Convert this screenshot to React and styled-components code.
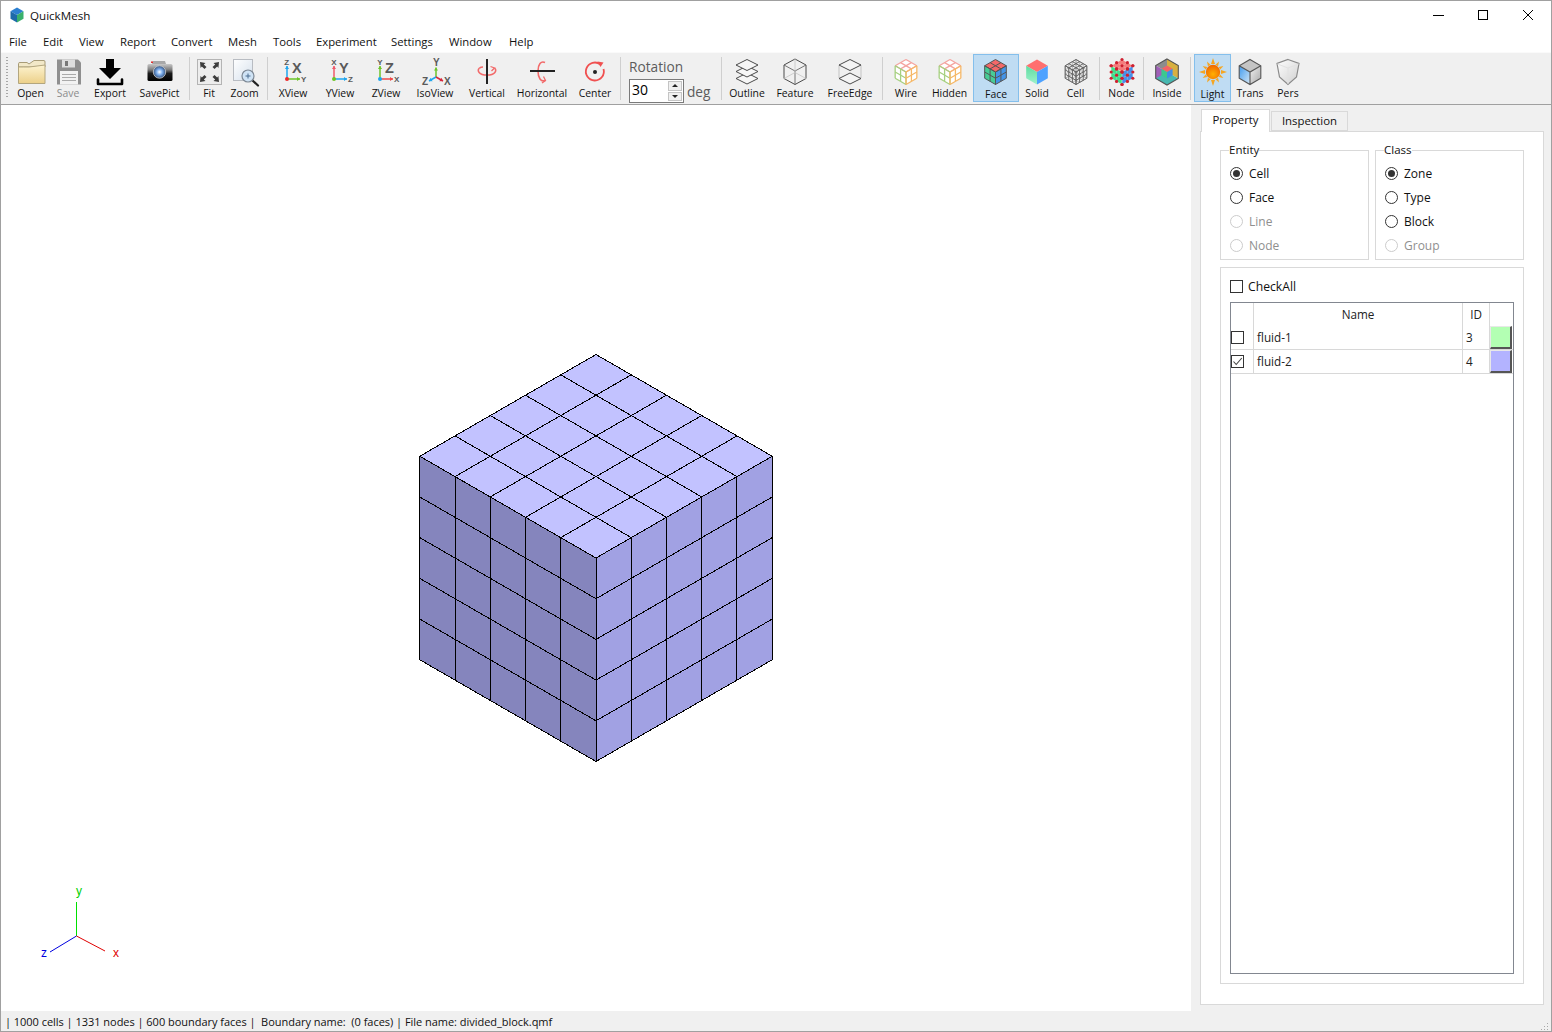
import React from "react";
import styled, { createGlobalStyle } from "styled-components";

const GlobalStyle = createGlobalStyle`
  html, body {
    margin: 0;
    padding: 0;
    background: #fff;
  }
  body {
    font-family: "Open Sans", "Liberation Sans", sans-serif;
    font-size: 11.3px;
    color: #111;
  }
  * {
    box-sizing: border-box;
  }
`

const Window = styled.div`
  width: 1552px;
  height: 1032px;
  display: flex;
  flex-direction: column;
  overflow: hidden;
  border: 1px solid #a0a0a0;
  background: #fff;
`
const TitleBar = styled.div`
  height: 30px;
  flex: none;
  display: flex;
  align-items: center;
  padding: 0 1px 2px 8px;
`
const TitleText = styled.div`
  margin-left: 5px;
  flex: 1;
  font-size: 11.6px;
`
const WinButton = styled.div`
  width: 45px;
  height: 28px;
  display: flex;
  align-items: center;
  justify-content: center;
`
const MenuBar = styled.div`
  height: 21px;
  flex: none;
  display: flex;
  align-items: center;
  padding-left: 8px;
`
const MenuItem = styled.div`
  width: ${(p) => p.$w}px;
  flex: none;
`
const Toolbar = styled.div`
  height: 53px;
  flex: none;
  display: flex;
  align-items: flex-start;
  padding: 1px 0 0 5px;
  background: #f0f0f0;
  border-top: 1px solid #fafafa;
  border-bottom: 1px solid #a0a0a0;
`
const Grip = styled.div`
  width: 2px;
  height: 42px;
  margin: 3px 4px 0 0;
  flex: none;
  background: repeating-linear-gradient(to bottom, #a8a8a8 0 1px, transparent 1px 3px);
`
const Sep = styled.div`
  width: 1px;
  height: 43px;
  margin: 3px 3px 0;
  flex: none;
  background: #cfcfcf;
`
const ToolButton = styled.div`
  width: ${(p) => p.$w}px;
  height: 48px;
  flex: none;
  display: flex;
  flex-direction: column;
  align-items: center;
  padding-top: 1px;
  border: 1px solid ${(p) => (p.$active ? "#84bfec" : "transparent")};
  background: ${(p) => (p.$active ? "#bfdcf3" : "transparent")};
  svg {
    display: block;
    flex: none;
  }
`
const ToolLabel = styled.div`
  font-size: 10.4px;
  line-height: 12px;
  margin-top: ${(p) => (p.$active ? "0" : "-1px")};
  white-space: nowrap;
  color: ${(p) => (p.$disabled ? "#8c8c8c" : "#111")};
`
const RotationBlock = styled.div`
  width: 94px;
  flex: none;
  padding: 4px 0 0 5px;
`
const RotationTitle = styled.div`
  font-size: 13.7px;
  line-height: 18px;
  color: #5c5c5c;
`
const RotationRow = styled.div`
  display: flex;
  align-items: center;
  margin-top: 3px;
`
const SpinBox = styled.div`
  width: 55px;
  height: 24px;
  flex: none;
  display: flex;
  align-items: center;
  justify-content: space-between;
  background: #fff;
  border: 1px solid #7a7a7a;
  padding: 0 1px 0 2px;
  color: #000;
`
const SpinValue = styled.span`
  font-size: 14px;
  line-height: 20px;
  margin-top: -2px;
`
const SpinArrows = styled.div`
  width: 14px;
  height: 20px;
  display: flex;
  flex-direction: column;
  gap: 1px;
`
const SpinArrow = styled.div`
  flex: 1;
  display: flex;
  align-items: center;
  justify-content: center;
  background: #f0f0f0;
  border: 1px solid #c4c4c4;
  &::after {
    content: "";
    border-left: 3px solid transparent;
    border-right: 3px solid transparent;
    ${(p) => (p.$down ? "border-top: 3px solid #222;" : "border-bottom: 3px solid #222;")}
  }
`
const DegLabel = styled.div`
  margin-left: 3px;
  font-size: 13.7px;
  color: #5c5c5c;
`
const Body = styled.div`
  flex: 1;
  min-height: 0;
  display: flex;
`
const Viewport = styled.div`
  position: relative;
  width: 1190px;
  flex: none;
  display: flex;
  align-items: center;
  justify-content: center;
  background: #fff;
`
const Triad = styled.svg`
  position: absolute;
  left: 36px;
  bottom: 42px;
  display: block;
`
const SidePanel = styled.div`
  flex: 1;
  min-width: 0;
  display: flex;
  flex-direction: column;
  background: #f0f0f0;
  padding: 3px 7px 6px 9px;
`
const TabRow = styled.div`
  display: flex;
  align-items: flex-end;
  height: 23px;
  flex: none;
  padding-left: 1px;
`
const Tab = styled.div`
  width: ${(p) => p.$w}px;
  height: ${(p) => (p.$selected ? "23px" : "20px")};
  flex: none;
  display: flex;
  align-items: center;
  justify-content: center;
  background: ${(p) => (p.$selected ? "#fff" : "#f0f0f0")};
  border: 1px solid #d9d9d9;
  border-bottom: ${(p) => (p.$selected ? "none" : "1px solid #d9d9d9")};
  margin-bottom: ${(p) => (p.$selected ? "-1px" : "0")};
  margin-left: ${(p) => (p.$selected ? "0" : "1px")};
  padding-bottom: ${(p) => (p.$selected ? "4px" : "2px")};
  z-index: ${(p) => (p.$selected ? 1 : 0)};
  font-size: 11.4px;
`
const TabPane = styled.div`
  flex: 1;
  min-height: 0;
  display: flex;
  flex-direction: column;
  gap: 7px;
  background: #fff;
  border: 1px solid #d9d9d9;
  padding: 10px 19px 20px;
`
const GroupRow = styled.div`
  display: flex;
  gap: 6px;
  flex: none;
`
const Group = styled.fieldset`
  width: 149px;
  height: 118px;
  margin: 0;
  padding: 3px 0 0 9px;
  border: 1px solid #d9d9d9;
  min-inline-size: 0;
`
const GroupTitle = styled.legend`
  padding: 0;
  margin-left: -1px;
  font-size: 11.5px;
  line-height: 16px;
`
const RadioRow = styled.div`
  height: 24px;
  display: flex;
  align-items: center;
  gap: 6px;
  font-size: 12px;
  color: ${(p) => (p.$disabled ? "#8f8f8f" : "#111")};
`
const RadioMark = styled.span`
  width: 13px;
  height: 13px;
  flex: none;
  display: flex;
  align-items: center;
  justify-content: center;
  border-radius: 50%;
  background: #fff;
  border: 1px solid ${(p) => (p.$disabled ? "#cccccc" : "#333")};
  &::after {
    content: "";
    width: 7px;
    height: 7px;
    border-radius: 50%;
    background: ${(p) => (p.$checked ? "#333" : "transparent")};
  }
`
const ListBox = styled.div`
  flex: 1;
  min-height: 0;
  display: flex;
  flex-direction: column;
  border: 1px solid #d9d9d9;
  padding: 9px;
`
const CheckAllRow = styled.div`
  height: 19px;
  flex: none;
  display: flex;
  align-items: center;
  gap: 5px;
  margin-bottom: 6px;
  font-size: 12.2px;
`
const CheckMark = styled.span`
  width: 13px;
  height: 13px;
  flex: none;
  display: flex;
  align-items: center;
  justify-content: center;
  background: #fff;
  border: 1px solid #333;
`
const Table = styled.div`
  flex: 1;
  min-height: 0;
  border: 1px solid #828790;
  background: #fff;
  font-size: 11.7px;
`
const TableRow = styled.div`
  display: grid;
  grid-template-columns: 23px 209px 27px 23px;
  height: ${(p) => (p.$header ? "23px" : "24px")};
  border-bottom: ${(p) => (p.$header ? "none" : "1px solid #d8d8d8")};
`
const Cell = styled.div`
  display: flex;
  align-items: center;
  justify-content: ${(p) => (p.$center ? "center" : "flex-start")};
  padding-left: ${(p) => (p.$center ? "0" : "3px")};
  padding-bottom: 2px;
  border-right: 1px solid ${(p) => (p.$last ? "transparent" : "#d8d8d8")};
  color: #222;
`
const CheckCell = styled(Cell)`
  justify-content: flex-start;
  padding-left: 0;
  padding-bottom: 0;
`
const ColorCell = styled.div`
  margin: 0 1px 0 0;
  background: ${(p) => p.$color};
  border-top: 1px solid #e8e8e8;
  border-left: 1px solid #e8e8e8;
  border-right: 2px solid #555;
  border-bottom: 2px solid #555;
`
const StatusBar = styled.div`
  height: 20px;
  flex: none;
  display: flex;
  align-items: center;
  justify-content: space-between;
  padding: 0 2px 0 4px;
  background: #f0f0f0;
  white-space: pre;
  font-size: 11px;
  letter-spacing: -0.03px;
`
const SizeGrip = styled.svg`
  align-self: flex-end;
  display: block;
`

// one isometric box, the big mesh and the small toolbar cubes all use it
const lerp = (a, b, t) => [a[0] + (b[0] - a[0]) * t, a[1] + (b[1] - a[1]) * t];

const cubeFaces = (cx, cy, r) => {
  const w = r * 0.866;
  const A = [cx, cy - r];
  const B = [cx + w, cy - r / 2];
  const C = [cx, cy];
  const D = [cx - w, cy - r / 2];
  const E = [cx - w, cy + r / 2];
  const F = [cx, cy + r];
  const G = [cx + w, cy + r / 2];
  return { top: [A, B, C, D], left: [D, C, F, E], right: [C, B, G, F] };
};

const toPoints = (pts) => pts.map((p) => p.join(",")).join(" ");

const faceGrid = ([a, b, c, d], n) => {
  const out = [];
  for (let i = 0; i <= n; i++) {
    out.push([lerp(a, d, i / n), lerp(b, c, i / n)]);
    out.push([lerp(a, b, i / n), lerp(d, c, i / n)]);
  }
  return out;
};

const faceNodes = ([a, b, c, d], n) => {
  const out = [];
  for (let i = 0; i <= n; i++) {
    for (let j = 0; j <= n; j++) {
      out.push(lerp(lerp(a, d, i / n), lerp(b, c, i / n), j / n));
    }
  }
  return out;
};

const IsoCube = ({ cx = 16, cy = 16, r = 12, n = 0, top = "none", left = "none", right = "none", stroke, topStroke, leftStroke, rightStroke, sw = 1, crisp }) => {
  const faces = cubeFaces(cx, cy, r);
  const rendering = crisp ? "crispEdges" : "auto";
  const strokes = { top: topStroke || stroke, left: leftStroke || stroke, right: rightStroke || stroke };
  const fills = { top, left, right };
  return (
    <g shapeRendering={rendering}>
      {Object.keys(faces).map((k) => (
        <polygon key={k} points={toPoints(faces[k])} fill={fills[k]} stroke="none" />
      ))}
      {n > 0 &&
        Object.keys(faces).map((k) =>
          faceGrid(faces[k], n).map(([p, q], i) => (
            <line key={k + i} x1={p[0]} y1={p[1]} x2={q[0]} y2={q[1]} stroke={strokes[k]} strokeWidth={sw} />
          ))
        )}
    </g>
  );
};

const MeshCube = () => (
  <svg width="354" height="408" viewBox="0 0 354 408" style={{ display: "block" }}>
    <IsoCube cx={177} cy={204} r={203.5} n={5} top="#c2c2ff" left="#8585bd" right="#a1a1e3" stroke="#000" crisp />
  </svg>
);

const Ic = ({ children }) => (
  <svg width="32" height="32" viewBox="0 0 32 32">
    {children}
  </svg>
);

const Arrow = ({ x1, y1, x2, y2, color }) => {
  const a = Math.atan2(y2 - y1, x2 - x1);
  const s = 3.6;
  const p1 = [x2 - s * Math.cos(a - 0.6), y2 - s * Math.sin(a - 0.6)];
  const p2 = [x2 - s * Math.cos(a + 0.6), y2 - s * Math.sin(a + 0.6)];
  return (
    <g>
      <line x1={x1} y1={y1} x2={x2} y2={y2} stroke={color} strokeWidth="1.5" />
      <polygon points={toPoints([[x2, y2], p1, p2])} fill={color} />
    </g>
  );
};

const AxisText = styled.text`
  font-family: "Liberation Sans", sans-serif;
  font-weight: 700;
  font-size: ${(p) => (p.$big ? "14.5px" : p.$mid ? "10px" : "8px")};
  fill: #5a5a5a;
`

const AxisIcon = ({ up, right, dot, upText, bigText, rightText }) => (
  <Ic>
    <Arrow x1={10} y1={23} x2={10} y2={10} color={up} />
    <Arrow x1={10} y1={23} x2={23} y2={23} color={right} />
    <circle cx={10} cy={23} r={2} fill={dot} />
    <AxisText x={7.3} y={8.5}>{upText}</AxisText>
    <AxisText $big x={15} y={17}>{bigText}</AxisText>
    <AxisText x={24} y={26}>{rightText}</AxisText>
  </Ic>
);

const icons = {
  open: (
    <Ic>
      <defs>
        <linearGradient id="folder" x1="0" y1="0" x2="0" y2="1">
          <stop offset="0" stopColor="#fdf3d0" />
          <stop offset="1" stopColor="#ecd089" />
        </linearGradient>
      </defs>
      <path d="M3.5 11 L3.5 7.5 Q3.5 6.5 5 6.5 L12 6.5 L14 8 L19 4.5 L29 4.5 Q30 4.5 30 6 L30 11 Z" fill="#f2e8c8" stroke="#a89c78" />
      <path d="M3.5 27.5 L3.5 11 Q8 11 14 11 L30 9 L30 27.5 Z" fill="url(#folder)" stroke="#b3a67e" />
    </Ic>
  ),
  save: (
    <Ic>
      <path d="M5 3.5 H26 L29 6.5 V28.5 H5 Z" fill="#8f8f8f" />
      <rect x="10" y="3.5" width="13" height="8" fill="#dedede" />
      <rect x="13" y="5" width="3" height="5" fill="#777" />
      <rect x="8" y="15" width="18" height="13.5" fill="#f2f2f2" />
      <path d="M10 18.5 H24 M10 21.5 H24 M10 24.5 H24" stroke="#aaa" />
    </Ic>
  ),
  export: (
    <Ic>
      <path d="M12 3 H20 V12 H27 L16 23 L5 12 H12 Z" fill="#000" />
      <path d="M5 23.5 V28 H29 V23.5" transform="translate(-1 0)" fill="none" stroke="#000" strokeWidth="2.6" strokeLinecap="round" strokeLinejoin="round" />
    </Ic>
  ),
  savepict: (
    <Ic>
      <defs>
        <linearGradient id="cam" x1="0" y1="0" x2="0" y2="1">
          <stop offset="0" stopColor="#c8c8c8" />
          <stop offset="0.35" stopColor="#7a7a7a" />
          <stop offset="0.55" stopColor="#1c1c1c" />
          <stop offset="1" stopColor="#000" />
        </linearGradient>
        <radialGradient id="lens">
          <stop offset="0" stopColor="#ffffff" />
          <stop offset="0.45" stopColor="#7fb0ee" />
          <stop offset="1" stopColor="#32507c" />
        </radialGradient>
      </defs>
      <path d="M8 8 L9 5 H21 L22 8 Z" fill="#a8a8a8" />
      <rect x="3.5" y="8" width="25" height="17" rx="1.5" fill="url(#cam)" />
      <rect x="7" y="5.5" width="2" height="1.4" fill="#e02020" />
      <circle cx="15.5" cy="16" r="6.2" fill="url(#lens)" stroke="#d0d0d0" strokeWidth="0.8" />
    </Ic>
  ),
  fit: (
    <Ic>
      <rect x="4.5" y="3.5" width="24" height="25" fill="#ededed" stroke="#b4b4b4" />
      <path d="M7 6 L12.5 7 L10.8 8.4 L13.5 11 L11.5 13 L8.8 10.4 L7.6 12 Z" fill="#3c3c3c" />
      <path d="M26 6 L20.5 7 L22.2 8.4 L19.5 11 L21.5 13 L24.2 10.4 L25.4 12 Z" fill="#3c3c3c" />
      <path d="M7 26 L12.5 25 L10.8 23.6 L13.5 21 L11.5 19 L8.8 21.6 L7.6 20 Z" fill="#3c3c3c" />
      <path d="M26 26 L20.5 25 L22.2 23.6 L19.5 21 L21.5 19 L24.2 21.6 L25.4 20 Z" fill="#3c3c3c" />
    </Ic>
  ),
  zoom: (
    <Ic>
      <defs>
        <linearGradient id="page" x1="0" y1="0" x2="1" y2="1">
          <stop offset="0" stopColor="#ffffff" />
          <stop offset="1" stopColor="#d5e0ec" />
        </linearGradient>
      </defs>
      <rect x="4.5" y="3.5" width="19" height="21" fill="url(#page)" stroke="#b8bcc2" />
      <line x1="23" y1="24" x2="29" y2="29.5" stroke="#222" strokeWidth="2.2" strokeLinecap="round" />
      <circle cx="19" cy="20" r="6" fill="#cfe3f5" stroke="#7d8894" strokeWidth="1.2" />
      <path d="M16.5 20 H21.5 M19 17.5 V22.5" stroke="#4a6c90" />
    </Ic>
  ),
  xview: <AxisIcon up="#1fa6ee" right="#6cc428" dot="#ee2a2a" upText="Z" bigText="X" rightText="Y" />,
  yview: <AxisIcon up="#f05a6a" right="#1fa6ee" dot="#6cc428" upText="X" bigText="Y" rightText="Z" />,
  zview: <AxisIcon up="#6cc428" right="#ee4a4a" dot="#1fa6ee" upText="Y" bigText="Z" rightText="X" />,
  isoview: (
    <Ic>
      <Arrow x1={17} y1={21} x2={17} y2={11.5} color="#6cc428" />
      <Arrow x1={17} y1={21} x2={10} y2={25} color="#1fa6ee" />
      <Arrow x1={17} y1={21} x2={24} y2={25} color="#d8283c" />
      <AxisText $mid x={14} y={10}>Y</AxisText>
      <AxisText $mid x={3} y={29}>Z</AxisText>
      <AxisText $mid x={25} y={29}>X</AxisText>
    </Ic>
  ),
  vertical: (
    <Ic>
      <path d="M8.5 12 C5.5 14.5 8 19 16 19 C24 19 26.5 14.5 23.5 12" fill="none" stroke="#f26a6a" strokeWidth="1.6" />
      <path d="M19.5 10.5 L23.5 12 L20.5 15" fill="none" stroke="#f26a6a" strokeWidth="1.3" />
      <path d="M8.5 12 Q10 11 12 11" fill="none" stroke="#f26a6a" strokeWidth="1.6" />
      <line x1="16" y1="3" x2="16" y2="28" stroke="#222" strokeWidth="2" />
    </Ic>
  ),
  horizontal: (
    <Ic>
      <path d="M19 6.5 C15 4.5 12 8.5 12 15 C12 22 15 26 19 24.5" fill="none" stroke="#f26a6a" strokeWidth="1.6" />
      <path d="M17.5 20.5 L19.5 24.5 L16 27" fill="none" stroke="#f26a6a" strokeWidth="1.3" />
      <line x1="4" y1="15" x2="29" y2="15" stroke="#222" strokeWidth="2" />
    </Ic>
  ),
  center: (
    <Ic>
      <path d="M21.5 8.5 A9 9 0 1 0 24.5 13" fill="none" stroke="#f05050" strokeWidth="1.8" />
      <path d="M18.5 5.5 L24.5 6.5 L21.5 11" fill="#f05050" />
      <circle cx="16" cy="16" r="2" fill="#222" />
    </Ic>
  ),
  outline: (
    <Ic>
      <g fill="#f6f6f6" stroke="#4a4a4a" strokeWidth="1">
        <path d="M16 17 L27 22.5 L16 28 L5 22.5 Z" />
        <path d="M16 10 L27 15.5 L16 21 L5 15.5 Z" />
        <path d="M16 3.5 L27 9 L16 14.5 L5 9 Z" />
      </g>
    </Ic>
  ),
  feature: (
    <Ic>
      <path d="M16 3 L27 9 V22.5 L16 28.5 L5 22.5 V9 Z" fill="none" stroke="#4a4a4a" strokeWidth="1" />
      <path d="M5 9 L16 15 L27 9 M16 15 V28.5" fill="none" stroke="#666" strokeWidth="0.9" />
      <path d="M16 3 V16.5 L5 22.5 M16 16.5 L27 22.5" fill="none" stroke="#c4c4c4" strokeWidth="0.8" />
    </Ic>
  ),
  freeedge: (
    <Ic>
      <path d="M5 9 V22 M27 9 V22" stroke="#c4c4c4" fill="none" />
      <path d="M5 9 L16 3.5 L27 9 L16 14.5 Z" fill="#f4f4f4" stroke="#4a4a4a" strokeWidth="1" />
      <path d="M5 22.5 L16 17 L27 22.5 L16 28 Z" fill="#f4f4f4" stroke="#4a4a4a" strokeWidth="1" />
    </Ic>
  ),
  wire: (
    <Ic>
      <IsoCube n={2} r={12.5} top="#fff" left="#fff" right="#fff" topStroke="#f4a4a0" leftStroke="#a6d080" rightStroke="#f6b868" sw={1.3} />
    </Ic>
  ),
  hidden: (
    <Ic>
      <IsoCube n={2} r={12.5} top="#fff" left="#fff" right="#fff" topStroke="#f4a4a0" leftStroke="#a6d080" rightStroke="#f6b868" sw={1.3} />
    </Ic>
  ),
  face: (
    <Ic>
      <IsoCube n={2} cx={15.5} r={12.5} top="#f46868" left="#48cc96" right="#4394e8" stroke="#555" sw={1} />
    </Ic>
  ),
  solid: (
    <Ic>
      <defs>
        <linearGradient id="solidl" x1="0" y1="0" x2="0" y2="1">
          <stop offset="0" stopColor="#5fdca0" />
          <stop offset="1" stopColor="#9ff2cc" />
        </linearGradient>
      </defs>
      <IsoCube r={12.5} top="#ff6f6f" left="url(#solidl)" right="#4da2ff" />
    </Ic>
  ),
  cell: (
    <Ic>
      <g transform="rotate(180 16 16)">
        <IsoCube n={3} r={12.5} stroke="#a8a8a8" sw={0.8} />
      </g>
      <IsoCube n={3} r={12.5} stroke="#666" sw={1} />
    </Ic>
  ),
  node: (
    <Ic>
      <IsoCube n={2} r={12.5} top="#f47c7c" left="#40e08c" right="#4a90e8" stroke="rgba(255,255,255,0.3)" sw={0.8} />
      {Object.values(cubeFaces(16, 16, 12.5)).map((f, i) =>
        faceNodes(f, 2).map((p, j) => <circle key={i + "-" + j} cx={p[0]} cy={p[1]} r="1.6" fill="#cf2030" />)
      )}
    </Ic>
  ),
  inside: (
    <Ic>
      <polygon points={toPoints([[16, 3], [27.3, 9.5], [16, 16], [4.7, 9.5]])} fill="#8d8d8d" />
      <polygon points={toPoints([[4.7, 9.5], [16, 16], [16, 29], [4.7, 22.5]])} fill="#a060b8" />
      <polygon points={toPoints([[16, 3], [27.3, 9.5], [27.3, 22.5], [16, 16]])} fill="#d8b040" />
      <polygon points={toPoints([[4.7, 22.5], [16, 16], [27.3, 22.5], [16, 29]])} fill="#46b8b0" />
      <IsoCube r={6.5} cy={16} top="#f46464" left="#3cc88e" right="#3f8ee6" />
      <polygon points={toPoints([[16, 3], [27.3, 9.5], [27.3, 22.5], [16, 29], [4.7, 22.5], [4.7, 9.5]])} fill="none" stroke="#555" strokeWidth="1.1" />
    </Ic>
  ),
  light: (
    <Ic>
      <defs>
        <radialGradient id="sun" cx="0.5" cy="0.65" r="0.6">
          <stop offset="0" stopColor="#ffb000" />
          <stop offset="1" stopColor="#f26a00" />
        </radialGradient>
      </defs>
      <g fill="#f5a623">
        {[0, 30, 60, 90, 120, 150, 180, 210, 240, 270, 300, 330].map((a) => (
          <polygon key={a} points={a % 90 === 0 ? "14,8 18,8 16,2" : "14.5,8.5 17.5,8.5 16,4"} transform={`rotate(${a} 16 16)`} />
        ))}
      </g>
      <circle cx="16" cy="16" r="7.2" fill="url(#sun)" />
    </Ic>
  ),
  trans: (
    <Ic>
      <defs>
        <linearGradient id="transl" x1="0" y1="0" x2="1" y2="1">
          <stop offset="0" stopColor="#3f9aee" />
          <stop offset="1" stopColor="#d6e8f6" />
        </linearGradient>
        <linearGradient id="transr" x1="0" y1="0" x2="1" y2="1">
          <stop offset="0" stopColor="#f2f2f2" />
          <stop offset="1" stopColor="#a8a8a8" />
        </linearGradient>
      </defs>
      <IsoCube r={12.5} top="#c4c4c4" left="url(#transl)" right="url(#transr)" />
      <path d="M16 3.5 L26.8 9.75 V22.25 L16 28.5 L5.2 22.25 V9.75 Z M5.2 9.75 L16 16 L26.8 9.75 M16 16 V28.5" fill="none" stroke="#555" strokeWidth="1.1" />
    </Ic>
  ),
  pers: (
    <Ic>
      <defs>
        <linearGradient id="persf" x1="0" y1="0" x2="1" y2="1">
          <stop offset="0" stopColor="#ffffff" />
          <stop offset="1" stopColor="#cfcfcf" />
        </linearGradient>
      </defs>
      <path d="M16 3.5 L27 7.5 L24.5 21 L16 28.5 L7.5 21 L5 7.5 Z" fill="url(#persf)" stroke="#8a8a8a" strokeWidth="1.2" />
      <path d="M5.5 8 L16 12 L26.5 8 M16 12 V28" fill="none" stroke="#e2e2e2" />
    </Ic>
  ),
};

const menus = [
  ["File", 34], ["Edit", 36], ["View", 41], ["Report", 51], ["Convert", 57], ["Mesh", 45],
  ["Tools", 43], ["Experiment", 75], ["Settings", 58], ["Window", 60], ["Help", 40],
];

const Tool = ({ icon, label, w, active, disabled }) => (
  <ToolButton $w={w} $active={active}>
    {icons[icon]}
    <ToolLabel $active={active} $disabled={disabled}>{label}</ToolLabel>
  </ToolButton>
);

const Radio = ({ label, checked, disabled }) => (
  <RadioRow $disabled={disabled}>
    <RadioMark $checked={checked} $disabled={disabled} />
    {label}
  </RadioRow>
);

const Tick = () => (
  <svg width="11" height="11" viewBox="0 0 11 11">
    <path d="M1.5 5.5 L4.2 8.5 L9.8 2" fill="none" stroke="#444" strokeWidth="1.1" />
  </svg>
);

const App = () => (
  <Window>
    <GlobalStyle />
    <TitleBar>
      <svg width="16" height="16" viewBox="0 0 32 32">
        <IsoCube r={15} top="#2c7fd0" left="#1e6aa8" right="#3ab06c" />
      </svg>
      <TitleText>QuickMesh</TitleText>
      <WinButton>
        <svg width="12" height="12" viewBox="0 0 12 12"><path d="M1 6.5 H12" stroke="#000" /></svg>
      </WinButton>
      <WinButton>
        <svg width="12" height="12" viewBox="0 0 12 12"><rect x="1.5" y="1.5" width="9" height="9" fill="none" stroke="#000" /></svg>
      </WinButton>
      <WinButton>
        <svg width="12" height="12" viewBox="0 0 12 12"><path d="M1 1 L11 11 M11 1 L1 11" stroke="#000" /></svg>
      </WinButton>
    </TitleBar>
    <MenuBar>
      {menus.map(([name, w]) => (
        <MenuItem key={name} $w={w}>{name}</MenuItem>
      ))}
    </MenuBar>
    <Toolbar>
      <Grip />
      <Tool icon="open" label="Open" w={37} />
      <Tool icon="save" label="Save" w={38} disabled />
      <Tool icon="export" label="Export" w={46} />
      <Tool icon="savepict" label="SavePict" w={53} />
      <Sep />
      <Tool icon="fit" label="Fit" w={32} />
      <Tool icon="zoom" label="Zoom" w={39} />
      <Sep />
      <Tool icon="xview" label="XView" w={44} />
      <Tool icon="yview" label="YView" w={50} />
      <Tool icon="zview" label="ZView" w={42} />
      <Tool icon="isoview" label="IsoView" w={56} />
      <Tool icon="vertical" label="Vertical" w={48} />
      <Tool icon="horizontal" label="Horizontal" w={62} />
      <Tool icon="center" label="Center" w={44} />
      <Sep />
      <RotationBlock>
        <RotationTitle>Rotation</RotationTitle>
        <RotationRow>
          <SpinBox>
            <SpinValue>30</SpinValue>
            <SpinArrows>
              <SpinArrow />
              <SpinArrow $down />
            </SpinArrows>
          </SpinBox>
          <DegLabel>deg</DegLabel>
        </RotationRow>
      </RotationBlock>
      <Sep />
      <Tool icon="outline" label="Outline" w={44} />
      <Tool icon="feature" label="Feature" w={52} />
      <Tool icon="freeedge" label="FreeEdge" w={58} />
      <Sep />
      <Tool icon="wire" label="Wire" w={40} />
      <Tool icon="hidden" label="Hidden" w={47} />
      <Tool icon="face" label="Face" w={46} active />
      <Tool icon="solid" label="Solid" w={36} />
      <Tool icon="cell" label="Cell" w={41} />
      <Sep />
      <Tool icon="node" label="Node" w={37} />
      <Sep />
      <Tool icon="inside" label="Inside" w={40} />
      <Sep />
      <Tool icon="light" label="Light" w={37} active />
      <Tool icon="trans" label="Trans" w={38} />
      <Tool icon="pers" label="Pers" w={38} />
    </Toolbar>
    <Body>
      <Viewport>
        <MeshCube />
        <Triad width="90" height="95" viewBox="0 -15 90 95">
          <path d="M39.5 13 V47" stroke="#00e000" shapeRendering="crispEdges" />
          <path d="M39.5 47 L13 63" stroke="#0000e0" />
          <path d="M39.5 47 L68 62" stroke="#e00000" />
          <text x="39" y="6" fontFamily="Liberation Sans" fontSize="12" fill="#00d000">y</text>
          <text x="4" y="68" fontFamily="Liberation Sans" fontSize="12" fill="#0000e0">z</text>
          <text x="76" y="68" fontFamily="Liberation Sans" fontSize="12" fill="#e00000">x</text>
        </Triad>
      </Viewport>
      <SidePanel>
        <TabRow>
          <Tab $w={69} $selected>Property</Tab>
          <Tab $w={77}>Inspection</Tab>
        </TabRow>
        <TabPane>
          <GroupRow>
            <Group>
              <GroupTitle>Entity</GroupTitle>
              <Radio label="Cell" checked />
              <Radio label="Face" />
              <Radio label="Line" disabled />
              <Radio label="Node" disabled />
            </Group>
            <Group>
              <GroupTitle>Class</GroupTitle>
              <Radio label="Zone" checked />
              <Radio label="Type" />
              <Radio label="Block" />
              <Radio label="Group" disabled />
            </Group>
          </GroupRow>
          <ListBox>
            <CheckAllRow>
              <CheckMark />
              CheckAll
            </CheckAllRow>
            <Table>
              <TableRow $header>
                <Cell $center />
                <Cell $center>Name</Cell>
                <Cell $center>ID</Cell>
                <Cell $center $last />
              </TableRow>
              <TableRow>
                <CheckCell><CheckMark /></CheckCell>
                <Cell>fluid-1</Cell>
                <Cell>3</Cell>
                <ColorCell $color="#b3ffb3" />
              </TableRow>
              <TableRow>
                <CheckCell><CheckMark><Tick /></CheckMark></CheckCell>
                <Cell>fluid-2</Cell>
                <Cell>4</Cell>
                <ColorCell $color="#b3b3ff" />
              </TableRow>
            </Table>
          </ListBox>
        </TabPane>
      </SidePanel>
    </Body>
    <StatusBar>
      {"| 1000 cells | 1331 nodes | 600 boundary faces |  Boundary name:  (0 faces) | File name: divided_block.qmf"}
      <SizeGrip width="10" height="10" viewBox="0 0 10 10">
        <path d="M8 2 h1 v1 h-1 z M5 5 h1 v1 h-1 z M8 5 h1 v1 h-1 z M2 8 h1 v1 h-1 z M5 8 h1 v1 h-1 z M8 8 h1 v1 h-1 z" fill="#a8a8a8" />
      </SizeGrip>
    </StatusBar>
  </Window>
);

export default App;
